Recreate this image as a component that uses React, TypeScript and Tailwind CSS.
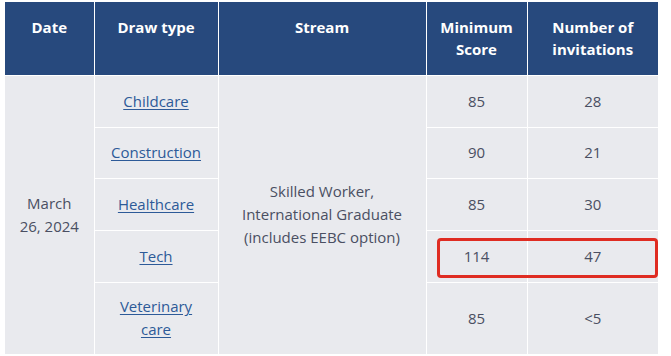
export default function App() {
  const rows = [
    { type: 'Childcare', score: '85', count: '28', h: 'h-[52px]' },
    { type: 'Construction', score: '90', count: '21', h: 'h-[51px]' },
    { type: 'Healthcare', score: '85', count: '30', h: 'h-[52px]' },
    { type: 'Tech', score: '114', count: '47', h: 'h-[52px]' },
    { type: 'Veterinary care', score: '85', count: '<5', h: 'h-[72px]' },
  ]

  return (
    <div className="min-h-screen bg-white pt-[2px] pl-[5px] font-['Open_Sans',sans-serif] text-[15px] leading-[23px] text-[#4a4f62]">
      <div className="relative w-[653px]">
        <table className="w-full table-fixed border-collapse">
          <colgroup>
            <col className="w-[89px]" />
            <col className="w-[124px]" />
            <col className="w-[208px]" />
            <col className="w-[101px]" />
            <col className="w-[131px]" />
          </colgroup>
          <thead>
            <tr className="h-[73px] bg-[#27497d] text-white font-bold leading-[22px]">
              <th className="border-r border-white px-2 pt-[14px] align-top">Date</th>
              <th className="border-r border-white px-2 pt-[14px] align-top">Draw type</th>
              <th className="border-r border-white px-2 pt-[14px] align-top">Stream</th>
              <th className="border-r border-white px-2 pt-[14px] align-top">
                Minimum
                <br />
                Score
              </th>
              <th className="px-2 pt-[14px] align-top">
                Number of
                <br />
                invitations
              </th>
            </tr>
          </thead>
          <tbody className="bg-[#e9eaee] text-center">
            {rows.map((r, i) => (
              <tr key={r.type} className={r.h}>
                {i === 0 && (
                  <td rowSpan={5} className="border-t border-r border-white px-2 align-middle">
                    March
                    <br />
                    26, 2024
                  </td>
                )}
                <td className="border border-white px-4 align-middle">
                  <a href="#" className="text-[#2d5a98] underline underline-offset-2">
                    {r.type === 'Veterinary care' ? (
                      <>
                        Veterinary
                        <br />
                        care
                      </>
                    ) : (
                      r.type
                    )}
                  </a>
                </td>
                {i === 0 && (
                  <td rowSpan={5} className="border border-white px-3 align-middle">
                    Skilled Worker,
                    <br />
                    International Graduate
                    <br />
                    (includes EEBC option)
                  </td>
                )}
                <td className="border border-white px-2 align-middle">{r.score}</td>
                <td className="border-t border-l border-white px-2 align-middle">{r.count}</td>
              </tr>
            ))}
          </tbody>
        </table>
        {/* highlight */}
        <div className="absolute left-[432px] top-[236px] h-[40px] w-[221px] rounded-[4px] border-[3px] border-[#df2c22]" />
      </div>
    </div>
  )
}
